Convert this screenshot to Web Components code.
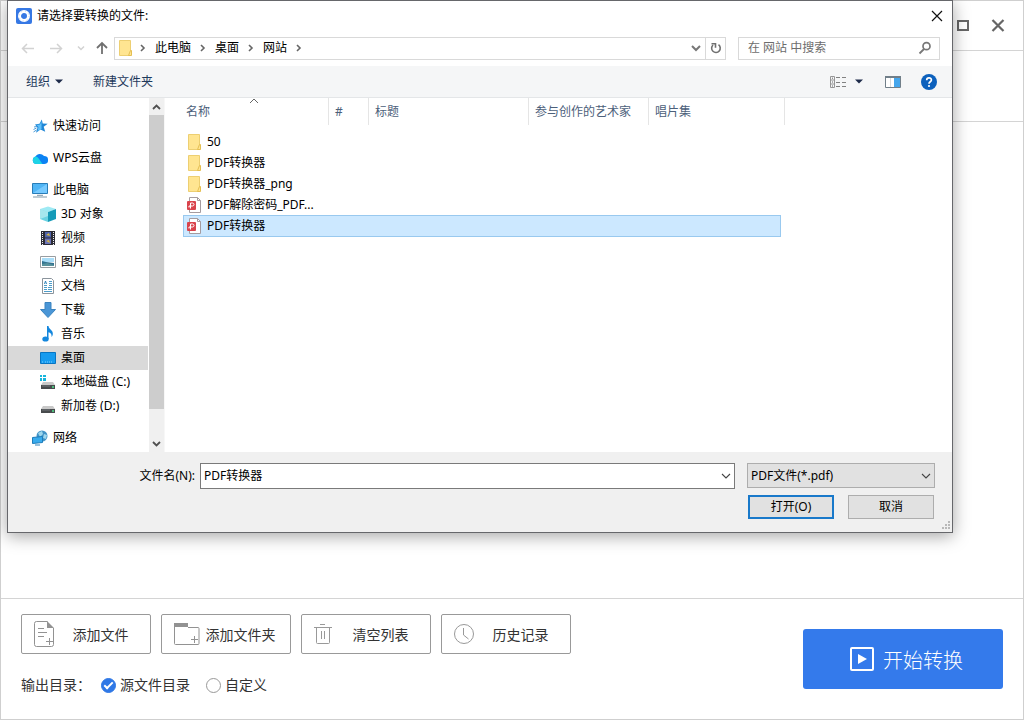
<!doctype html>
<html lang="zh-CN">
<head>

  <meta charset="utf-8">
  <title>PDF转换器</title>

  <style>
    body {
      margin: 0;
      font-family: "Noto Sans", "Noto Sans CJK SC", sans-serif;
      font-size: 12px;
      color: #000;
      background: white;
    }
  </style>

  <template id="converter-app-content">
    <style>
      :host {
        display: flex;
        flex-direction: column;
        position: relative;
        box-sizing: border-box;
        min-height: 100vh;
        border: 1px solid #cfcfcf;
        background: white;
        font-size: 14px;
        color: #333;
      }
      header {
        display: flex;
        justify-content: flex-end;
        align-items: center;
        gap: 18px;
        height: 49px;
        padding-right: 15px;
        border-bottom: 1px solid #d4d4d4;
      }
      header button {
        display: flex;
        padding: 0;
        border: 0;
        background: none;
      }
      .strip {
        height: 70px;
        border-bottom: 1px solid #d4d4d4;
      }
      main {
        flex: 1;
      }
      footer {
        display: flex;
        justify-content: space-between;
        align-items: flex-start;
        padding: 15px 20px 24px;
        border-top: 1px solid #d4d4d4;
      }
      .tools {
        display: flex;
        gap: 10px;
      }
      fieldset {
        display: flex;
        align-items: center;
        height: 20px;
        margin: 21px 0 0;
        padding: 0;
        border: 0;
        line-height: 20px;
      }
      .caption {
        width: 80px;
      }
      label {
        display: flex;
        align-items: center;
        gap: 4px;
        margin-right: 16px;
      }
      input {
        appearance: none;
        box-sizing: border-box;
        width: 15px;
        height: 15px;
        margin: 0;
        border: 1px solid #999;
        border-radius: 50%;
      }
      input:checked {
        border-color: #2f78e6;
        background: #2f78e6;
      }
      input:checked::before {
        content: "";
        display: block;
        width: 7px;
        height: 3px;
        margin: 3px 0 0 2px;
        border: solid white;
        border-width: 0 0 2px 2px;
        transform: rotate(-45deg);
      }
      .start {
        display: flex;
        justify-content: center;
        align-items: center;
        gap: 9px;
        width: 200px;
        height: 60px;
        margin-top: 15px;
        padding: 0 0 0 7px;
        border: 0;
        border-radius: 3px;
        background: #347aeb;
        color: white;
        font: inherit;
        font-size: 20px;
        font-weight: 300;
      }
    </style>
    <header>
      <button aria-label="最大化"><ui-icon name="maximize"></ui-icon></button>
      <button aria-label="关闭"><ui-icon name="close-bold"></ui-icon></button>
    </header>
    <div class="strip"></div>
    <main></main>
    <footer>
      <div>
        <div class="tools">
          <tool-button icon="add-file">添加文件</tool-button>
          <tool-button icon="add-folder">添加文件夹</tool-button>
          <tool-button icon="trash">清空列表</tool-button>
          <tool-button icon="clock">历史记录</tool-button>
        </div>
        <fieldset>
          <span class="caption">输出目录：</span>
          <label><input type="radio" name="output" checked>源文件目录</label>
          <label><input type="radio" name="output">自定义</label>
        </fieldset>
      </div>
      <button class="start"><ui-icon name="play"></ui-icon>开始转换</button>
    </footer>
    <slot></slot>
  </template>

  <template id="tool-button-content">
    <style>
      :host {
        display: block;
      }
      button {
        display: grid;
        grid-template-columns: 28px 1fr;
        align-items: center;
        box-sizing: border-box;
        width: 130px;
        height: 40px;
        padding: 0 10px 0 11px;
        border: 1px solid #999;
        border-radius: 2px;
        background: white;
        color: #333;
        font: inherit;
        font-size: 14px;
        white-space: nowrap;
      }
    </style>
    <button><ui-icon></ui-icon><span><slot></slot></span></button>
  </template>

  <template id="open-dialog-content">
    <style>
      :host {
        display: block;
        /* floats over the converter window */
        position: absolute;
        top: -1px;
        left: 6px;
        right: 70px;
        border: 1px solid #66676b;
        background: white;
        box-shadow: 0 3px 16px rgba(0, 0, 0, 0.36);
        font-size: 12px;
        line-height: 16px;
        color: #000;
      }
      button, input, select {
        font: inherit;
        color: inherit;
      }
      .title {
        display: flex;
        align-items: center;
        gap: 5px;
        height: 29px;
        padding: 0 8px;
      }
      .title span {
        flex: 1;
      }
      .plain {
        display: flex;
        justify-content: center;
        align-items: center;
        padding: 0;
        border: 0;
        background: none;
      }
      .bar {
        display: flex;
        align-items: center;
        height: 36px;
        padding: 0 12px 0 6px;
      }
      .bar .wide {
        width: 28px;
      }
      .bar .slim {
        width: 21px;
      }
      .address {
        display: flex;
        align-items: center;
        flex: 1;
        height: 21px;
        margin-right: 12px;
        margin-left: 2px;
        padding-left: 3px;
        border: 1px solid #d9d9d9;
      }
      .address nav {
        display: flex;
        align-items: center;
        flex: 1;
        margin-left: -3px;
      }
      .address a {
        color: inherit;
        text-decoration: none;
      }
      .address .refresh {
        align-self: stretch;
        width: 20px;
        border-left: 1px solid #d9d9d9;
      }
      .search {
        display: flex;
        align-items: center;
        box-sizing: border-box;
        width: 202px;
        height: 23px;
        padding: 0 7px 0 9px;
        border: 1px solid #d9d9d9;
      }
      .search input, .combo input {
        flex: 1;
        min-width: 0;
        padding: 0;
        border: 0;
        outline: 0;
        background: none;
      }
      .search input::placeholder {
        color: #6d6d6d;
      }
      .commands {
        display: flex;
        align-items: center;
        height: 31px;
        padding: 0 15px 0 18px;
        border-bottom: 1px solid #e4e6e8;
        background: #f5f6f7;
        color: #1e395b;
      }
      .commands .organize {
        gap: 5px;
        margin-right: 30px;
      }
      .commands .right {
        display: flex;
        align-items: center;
        gap: 20px;
        margin-left: auto;
      }
      .commands .view {
        gap: 9px;
        margin-right: 2px;
      }
      .content {
        display: flex;
      }
      aside {
        width: 140px;
        padding: 16px 0 2px;
      }
      .footer {
        padding: 11px 17px 13px 0;
        background: #f0f0f0;
      }
      .row {
        display: flex;
      }
      .row label {
        width: 187px;
        margin-right: 5px;
        line-height: 26px;
        text-align: right;
      }
      .combo {
        display: flex;
        align-items: center;
        flex: 1;
        box-sizing: border-box;
        height: 26px;
        margin-right: 12px;
        padding: 0 2px 0 3px;
        border: 1px solid #7a7a7a;
        background: white;
      }
      .type {
        display: grid;
        align-items: center;
        width: 188px;
        height: 25px;
      }
      .type > * {
        grid-area: 1 / 1;
      }
      .type ui-icon {
        justify-self: end;
        margin-right: 3px;
        pointer-events: none;
      }
      select {
        appearance: none;
        width: 100%;
        height: 25px;
        padding: 0 3px;
        border: 1px solid #adadad;
        border-radius: 0;
        background: #e1e1e1;
      }
      .actions {
        display: flex;
        justify-content: flex-end;
        gap: 14px;
        margin: 6px 1px 0 0;
      }
      .actions button {
        width: 86px;
        height: 24px;
        padding: 0;
        border: 1px solid #adadad;
        background: #e1e1e1;
      }
      .actions .default {
        border: 2px solid #1979ca;
      }
      .grip {
        position: absolute;
        right: 2px;
        bottom: 2px;
      }
    </style>
    <div class="title">
      <ui-icon name="app"></ui-icon>
      <span>请选择要转换的文件:</span>
      <button class="plain" aria-label="关闭"><ui-icon name="close"></ui-icon></button>
    </div>
    <div class="bar">
      <button class="plain wide" aria-label="后退"><ui-icon name="back"></ui-icon></button>
      <button class="plain wide" aria-label="前进"><ui-icon name="forward"></ui-icon></button>
      <button class="plain slim" aria-label="最近"><ui-icon name="recent"></ui-icon></button>
      <button class="plain slim" aria-label="上移"><ui-icon name="up"></ui-icon></button>
      <div class="address">
        <ui-icon name="folder"></ui-icon>
        <nav>
          <ui-icon name="crumb"></ui-icon><a href="#pc">此电脑</a>
          <ui-icon name="crumb"></ui-icon><a href="#desktop">桌面</a>
          <ui-icon name="crumb"></ui-icon><a href="#site">网站</a>
          <ui-icon name="crumb"></ui-icon>
        </nav>
        <button class="plain" aria-label="历史"><ui-icon name="down-bold"></ui-icon></button>
        <button class="plain refresh" aria-label="刷新"><ui-icon name="refresh"></ui-icon></button>
      </div>
      <div class="search">
        <input type="text" placeholder="在 网站 中搜索" aria-label="搜索">
        <ui-icon name="search"></ui-icon>
      </div>
    </div>
    <div class="commands">
      <button class="plain organize">组织 <ui-icon name="caret"></ui-icon></button>
      <button class="plain">新建文件夹</button>
      <div class="right">
        <button class="plain view" aria-label="更改视图"><ui-icon name="view"></ui-icon><ui-icon name="caret"></ui-icon></button>
        <button class="plain" aria-label="预览窗格"><ui-icon name="preview"></ui-icon></button>
        <button class="plain" aria-label="帮助"><ui-icon name="help"></ui-icon></button>
      </div>
    </div>
    <div class="content">
      <aside>
        <nav-item icon="star">快速访问</nav-item>
        <nav-item icon="cloud" group>WPS云盘</nav-item>
        <nav-item icon="pc" group>此电脑</nav-item>
        <nav-item icon="cube" child>3D 对象</nav-item>
        <nav-item icon="film" child>视频</nav-item>
        <nav-item icon="picture" child>图片</nav-item>
        <nav-item icon="document" child>文档</nav-item>
        <nav-item icon="download" child>下载</nav-item>
        <nav-item icon="music" child>音乐</nav-item>
        <nav-item icon="desktop" child selected>桌面</nav-item>
        <nav-item icon="disk-c" child>本地磁盘 (C:)</nav-item>
        <nav-item icon="disk" child>新加卷 (D:)</nav-item>
        <nav-item icon="network" group>网络</nav-item>
      </aside>
      <scroll-bar></scroll-bar>
      <file-list></file-list>
    </div>
    <div class="footer">
      <div class="row">
        <label for="filename">文件名(N):</label>
        <div class="combo">
          <input id="filename" type="text" value="PDF转换器">
          <ui-icon name="down"></ui-icon>
        </div>
        <div class="type">
          <select aria-label="文件类型"><option>PDF文件(*.pdf)</option></select>
          <ui-icon name="down"></ui-icon>
        </div>
      </div>
      <div class="actions">
        <button class="default">打开(O)</button>
        <button>取消</button>
      </div>
    </div>
    <ui-icon class="grip" name="grip"></ui-icon>
  </template>

  <template id="nav-item-content">
    <style>
      :host {
        display: block;
      }
      :host([group]) {
        margin-top: 8px;
      }
      a {
        display: flex;
        align-items: center;
        gap: 5px;
        height: 24px;
        padding-left: 24px;
        color: inherit;
        text-decoration: none;
        white-space: nowrap;
      }
      :host([child]) a {
        padding-left: 32px;
      }
      :host([selected]) a {
        background: #d9d9d9;
      }
    </style>
    <a href="#"><ui-icon></ui-icon><span><slot></slot></span></a>
  </template>

  <template id="scroll-bar-content">
    <style>
      :host {
        display: flex;
        flex-direction: column;
        width: 15px;
        margin-left: 1px;
        border-right: 1px solid #f7f7f7;
        background: #f0f0f0;
      }
      ui-icon {
        height: 17px;
      }
      .track {
        flex: 1;
      }
      .thumb {
        height: 92%;
        background: #cdcdcd;
      }
    </style>
    <ui-icon name="scroll-up"></ui-icon>
    <div class="track"><div class="thumb"></div></div>
    <ui-icon name="scroll-down"></ui-icon>
  </template>

  <template id="file-list-content">
    <style>
      :host {
        display: block;
        flex: 1;
        min-width: 0;
        padding-left: 18px;
      }
      table {
        width: 602px;
        table-layout: fixed;
        border-collapse: separate;
        border-spacing: 0;
      }
      th, td {
        padding: 0;
        text-align: left;
        font-weight: normal;
        white-space: nowrap;
      }
      th {
        position: relative;
        padding-bottom: 6px;
        color: #4c607a;
      }
      th span {
        display: block;
        height: 27px;
        padding-left: 6px;
        border-right: 1px solid #e5e5e5;
        line-height: 27px;
      }
      th:first-child span {
        padding-left: 3px;
      }
      th ui-icon {
        position: absolute;
        top: 0;
        left: 66px;
      }
      td {
        height: 21px;
      }
      td div {
        display: flex;
        align-items: center;
        gap: 4px;
        padding-left: 4px;
      }
      .selected td {
        height: 20px;
        border: solid #99c9ef;
        border-width: 1px 0;
        background: #cce8ff;
      }
      .selected td:first-child {
        border-left-width: 1px;
      }
      .selected td:first-child div {
        padding-left: 3px;
      }
      .selected td:nth-child(5) {
        border-right-width: 1px;
      }
      .selected td.edge {
        border-color: transparent;
        background: none;
      }
    </style>
    <table>
      <colgroup>
        <col style="width: 146px"><col style="width: 40px"><col style="width: 160px"><col style="width: 120px"><col style="width: 132px"><col style="width: 4px">
      </colgroup>
      <thead>
        <tr>
          <th><span>名称</span><ui-icon name="sort"></ui-icon></th>
          <th><span>#</span></th>
          <th><span>标题</span></th>
          <th><span>参与创作的艺术家</span></th>
          <th colspan="2"><span>唱片集</span></th>
        </tr>
      </thead>
      <tbody></tbody>
    </table>
  </template>

  <script>

    const disk = '<path d="M3 8h10l2 3H1z" fill="#c9c9c9"/><path d="M1 11h14v4H1z" fill="#484b4d"/><path d="M2 12h8" stroke="#73797c"/><path d="M12 13h2" stroke="#4fe08b" stroke-width="1.5"/>';

    // name: [width, height, markup]
    const icons = {
      'maximize': [14, 14, '<rect x="2" y="2" width="10" height="9" fill="none" stroke="#666" stroke-width="2"/>'],
      'close-bold': [20, 14, '<path d="M4.500 1l11 11M15.500 1l-11 11" fill="none" stroke="#666" stroke-width="2.200"/>'],
      'app': [16, 16, '<rect width="16" height="16" rx="2" fill="#3678e4"/><circle cx="8" cy="8" r="4.500" fill="none" stroke="#fff" stroke-width="3"/><circle cx="8" cy="8" r="5" fill="none" stroke="#b9d1f7" stroke-dasharray="1 3"/>'],
      'close': [14, 14, '<path d="M2 2l10 10M12 2L2 12" stroke="#111" stroke-width="1.200"/>'],
      'back': [16, 16, '<path d="M14 8.500H2.500M7 4L2.500 8.500 7 13" fill="none" stroke="#d2d2d2" stroke-width="1.500"/>'],
      'forward': [16, 16, '<path d="M2 8.500h11.500M9 4l4.500 4.500L9 13" fill="none" stroke="#d2d2d2" stroke-width="1.500"/>'],
      'recent': [8, 6, '<path d="M1 1.500l3 3 3-3" fill="none" stroke="#d2d2d2" stroke-width="1.500"/>'],
      'up': [16, 16, '<path d="M8 14V3M3 8l5-5 5 5" fill="none" stroke="#707070" stroke-width="1.800"/>'],
      'folder': [16, 16, '<path d="M1.500.5h11v15h-11z" fill="#ffe591" stroke="#edcf72"/><path d="M12.500 10.500h1v5h-3z" fill="#ffe591" stroke="#e5bf52"/>'],
      'crumb': [24, 12, '<path d="M10 3l3 3-3 3" fill="none" stroke="#666" stroke-width="1.600"/>'],
      'down-bold': [18, 12, '<path d="M5 4l4 4 4-4" fill="none" stroke="#777" stroke-width="2"/>'],
      'refresh': [14, 14, '<path d="M9.500 3.700A4.300 4.300 0 1 1 4 4" fill="none" stroke="#707070" stroke-width="1.600"/><path d="M2.500 2.700h4v4" fill="none" stroke="#707070" stroke-width="1.600"/>'],
      'search': [14, 14, '<circle cx="8.500" cy="5.200" r="3.500" fill="none" stroke="#777" stroke-width="1.700"/><path d="M6 8l-4.500 4.500" stroke="#777" stroke-width="1.800"/>'],
      'caret': [8, 5, '<path d="M0 .5h8l-4 4z" fill="#1e2b4a"/>'],
      'view': [16, 14, '<path d="M.5 1.500h4v11h-4zM.5 5h4M.5 9h4" fill="none" stroke="#969696"/><path d="M2 3.200h1M2 7h1M2 11h1" stroke="#666"/><path d="M6 2.500h4M12 2.500h4M6 7.500h4M12 7.500h4M6 11.500h4M12 11.500h4" stroke="#818181"/>'],
      'preview': [16, 12, '<path d="M.5.5h15v11H.5z" fill="#fff" stroke="#717f89"/><path d="M0 1h16" stroke="#717f89" stroke-width="2"/><path d="M9 2h6v9H9z" fill="#45a6ec"/><path d="M5.500 2v9" stroke="#dadada"/>'],
      'help': [16, 16, '<circle cx="8" cy="8" r="8" fill="#0d61bd"/><path d="M5.700 6.200c0-3 4.800-3 4.700-.2C10.400 7.800 8 7.800 8 9.800" fill="none" stroke="#fff" stroke-width="1.700"/><circle cx="8" cy="12" r="1.100" fill="#fff"/>'],
      'sort': [10, 6, '<path d="M1 5l4-4 4 4" fill="none" stroke="#666"/>'],
      'scroll-up': [15, 17, '<path d="M4 11l3.500-3.500L11 11" fill="none" stroke="#505050" stroke-width="1.800"/>'],
      'scroll-down': [15, 17, '<path d="M4 7l3.500 3.500L11 7" fill="none" stroke="#505050" stroke-width="1.800"/>'],
      'down': [12, 12, '<path d="M2 4l4 4 4-4" fill="none" stroke="#444" stroke-width="1.100"/>'],
      'grip': [9, 9, '<path d="M7 1h2M4 4h2M7 4h2M1 7h2M4 7h2M7 7h2" stroke="#b8b8b8" stroke-width="2"/>'],
      'star': [16, 16, '<path d="M9.800 1.500l.9 4 5 .3-4 3 1.500 5-4.700-2.300-4.500 3.200 1.500-5L3 6.500l4.500-.8z" fill="#1e86d6"/><path d="M9.500 3v8L5.500 13l1-4-2-2 3.500-.5z" fill="#5fc0fa"/><path d="M2 9l3-.5M1.500 11.500l3-1.500M1.500 14l3-2" stroke="#4a9bd8"/>'],
      'cloud': [16, 16, '<path d="M4 14a3.800 3.800 0 0 1-.5-7.400A5 5 0 0 1 12 6a4 4 0 0 1 .2 8z" fill="#0c82f3"/><path d="M4 14a3.800 3.800 0 0 1-.4-7.400C6.500 6.500 7.500 10.500 10.500 14z" fill="#1ed3e6"/>'],
      'pc': [16, 16, '<path d="M.5 1.500h15v10H.5z" fill="#50b5f5" stroke="#287db8"/><path d="M1 11L15 2v9z" fill="#77caff"/><path d="M5 13.300h6M1 15h14" stroke="#7f98a8"/>'],
      'cube': [16, 16, '<path d="M0 3L8 .5 16 3 8 6z" fill="#9eeaf4"/><path d="M0 3l8 3v10l-8-3z" fill="#6bd3e2"/><path d="M16 3L8 6v10l8-3z" fill="#159bb8"/><path d="M0 3l8 3v4L0 13z" fill="#a5e7ee"/>'],
      'film': [16, 16, '<path d="M1 1h14v14H1z" fill="#2b2c36"/><path d="M5 2h6v5.500H5z" fill="#4e63ab"/><path d="M5 8.500h6V14H5z" fill="#6d75b8"/><path d="M6 5l3-2 1 3zM6 11l3-1 1 3z" fill="#d4b642"/><path d="M2.500 2v13M13.500 2v13" stroke="#f1f1f1" stroke-dasharray="1 1"/>'],
      'picture': [16, 16, '<path d="M.5 2.500h15v11H.5z" fill="#fff" stroke="#989da1"/><path d="M2 4h12v4H2z" fill="#a9ddf8"/><path d="M2 7l4 1 8 1v3H2z" fill="#317391"/><path d="M2 10l5-1 7 2v1H2z" fill="#57919c"/>'],
      'document': [16, 16, '<path d="M2.500.5h9l2 2v13h-11z" fill="#fff" stroke="#8b949c"/><path d="M4 7.500h3M9 3.500h3M9 5.500h3M4 9.500h3M8 9.500h4M4 11.500h3M8 11.500h4M4 13.500h8M9 7.500h3" stroke="#4d9dca"/><path d="M4.500 6l1-3 1 3" fill="none" stroke="#2d83b8"/>'],
      'download': [16, 16, '<path d="M5 .5h6v7h4.500L8 15.500.5 7.500H5z" fill="#4a96d6" stroke="#3a83bf"/>'],
      'music': [16, 16, '<path d="M7 0h1.500c.3 3.500 5 4 4.300 8.500-.2 1.200-.8 2-1.300 2.500.5-3-1-4.200-3-4.800V13H7z" fill="#1487dd"/><ellipse cx="5.500" cy="13" rx="3.200" ry="2.600" fill="#1487dd"/>'],
      'desktop': [16, 16, '<path d="M.5 2.500h15v11H.5z" fill="#169bef" stroke="#0875c2"/><path d="M2 12h2M5 12h7" stroke="#7cd0ff" stroke-dasharray="1 1"/>'],
      'disk': [16, 16, disk],
      'disk-c': [16, 16, disk + '<path d="M0 1h2v2H0zM3 1h3v2H3zM0 4h2v3H0zM3 4h3v3H3z" fill="#16b5dc"/>'],
      'network': [16, 16, '<circle cx="10" cy="6" r="5.500" fill="#4293c6"/><path d="M6 3l4-2 1 3-3 3zM12 4l3 1-1 4-3-1z" fill="#9fd7ed"/><path d="M.5 7.500l10-1v6l-10 1z" fill="#38abed" stroke="#1c7cba"/><path d="M3 15h5" stroke="#3083b9"/>'],
      'pdf': [16, 16, '<path d="M2.500.5h8l3 3v12h-11z" fill="#fff" stroke="#a59ca0"/><path d="M10.500.5v3h3" fill="none" stroke="#a59ca0"/><rect y="4" width="9" height="9" rx="1" fill="#d9434c"/><path d="M3.500 11.500V6h2c2 0 2 3 0 3H2v1.500" fill="none" stroke="#fff"/>'],
      'add-file': [22, 28, '<path d="M14.500 1.500h-11a2 2 0 0 0-2 2v21a2 2 0 0 0 2 2h15a2 2 0 0 0 2-2V8" fill="none" stroke="#929292"/><path d="M14 1v7h7z" fill="#929292"/><path d="M5 8.500h6M5 12.500h9M5 16.500h6M16.500 18v7M13 21.500h7" stroke="#929292"/>'],
      'add-folder': [28, 24, '<path d="M1 1h14v4H1z" fill="#929292"/><path d="M15 5.500h10a1 1 0 0 1 1 1v15a1 1 0 0 1-1 1H2.500a1 1 0 0 1-1-1V4" fill="none" stroke="#929292"/><path d="M21.500 14v7M18 17.500h7" stroke="#929292"/>'],
      'trash': [22, 22, '<path d="M7 1.500h5M1 4.500h18M3.500 5v14.500a1 1 0 0 0 1 1h11a1 1 0 0 0 1-1V5M8.500 8v8M11.500 8v8" fill="none" stroke="#999"/>'],
      'clock': [22, 22, '<circle cx="11" cy="11" r="9.500" fill="none" stroke="#999"/><path d="M10.500 5v7l5 4" fill="none" stroke="#999"/>'],
      'play': [24, 24, '<rect x="1" y="1" width="22" height="22" rx="1" fill="none" stroke="#fff" stroke-width="2"/><path d="M8 7l9 5-9 5z" fill="#fff"/>']
    };

    customElements.define('ui-icon', class extends HTMLElement {

      static get observedAttributes() {
        return ['name'];
      }

      attributeChangedCallback() {
        this.root = this.root || this.attachShadow({mode: 'open'});
        const [w, h, body] = icons[this.getAttribute('name')];
        this.root.innerHTML = `
          <style>
            :host { display: block; flex: none; }
            svg { display: block; }
          </style>
          <svg width="${w}" height="${h}" viewBox="0 0 ${w} ${h}" aria-hidden="true">${body}</svg>`;
      }

    });

    class TemplateElement extends HTMLElement {

      connectedCallback() {
        const template = document.querySelector(`#${this.localName}-content`);
        this.root = this.attachShadow({mode: 'open'});
        this.root.appendChild(document.importNode(template.content, true));
        if (this.hasAttribute('icon')) {
          this.root.querySelector('ui-icon').setAttribute('name', this.getAttribute('icon'));
        }
      }

    }

    customElements.define('tool-button', class extends TemplateElement {});
    customElements.define('nav-item', class extends TemplateElement {});
    customElements.define('scroll-bar', class extends TemplateElement {});

    const files = [
      {icon: 'folder', name: '50'},
      {icon: 'folder', name: 'PDF转换器'},
      {icon: 'folder', name: 'PDF转换器_png'},
      {icon: 'pdf', name: 'PDF解除密码_PDF...'},
      {icon: 'pdf', name: 'PDF转换器', selected: true}
    ];

    customElements.define('file-list', class extends TemplateElement {

      connectedCallback() {
        super.connectedCallback();
        this.root.querySelector('tbody').innerHTML = files.map(f => `
          <tr class="${f.selected ? 'selected' : ''}">
            <td><div><ui-icon name="${f.icon}"></ui-icon>${f.name}</div></td>
            <td></td><td></td><td></td><td></td><td class="edge"></td>
          </tr>`).join('');
      }

    });

    customElements.define('open-dialog', class extends TemplateElement {});
    customElements.define('converter-app', class extends TemplateElement {});

  </script>

</head>
<body>
  <converter-app>
    <open-dialog></open-dialog>
  </converter-app>
</body>
</html>
